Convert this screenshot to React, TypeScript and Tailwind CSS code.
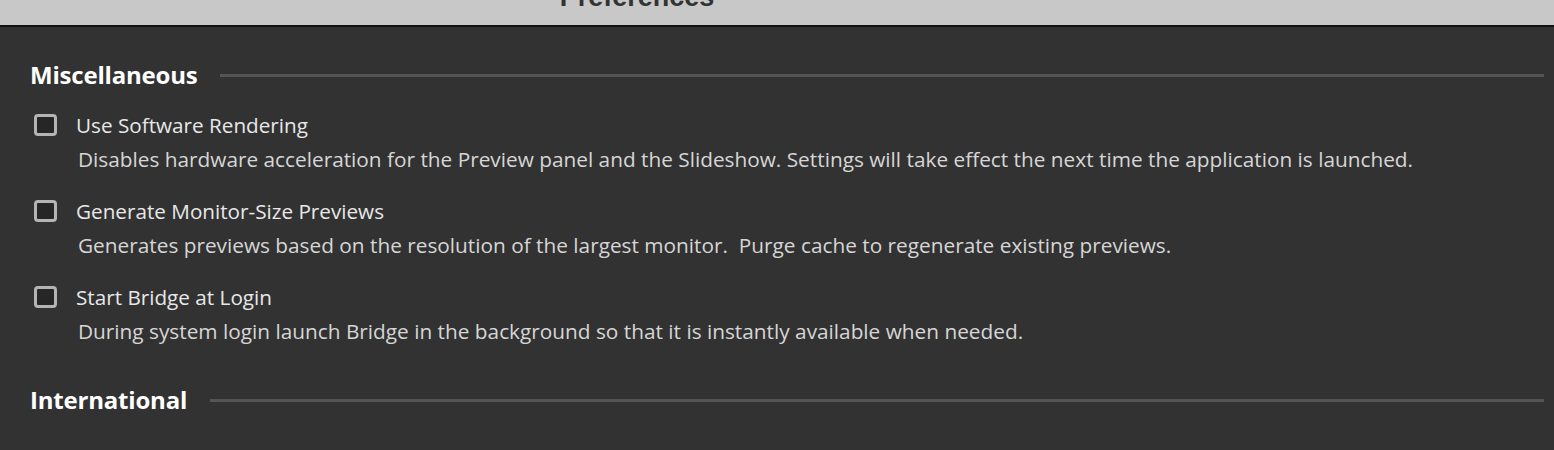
const sections = [
  {
    title: "Miscellaneous",
    items: [
      {
        label: "Use Software Rendering",
        description:
          "Disables hardware acceleration for the Preview panel and the Slideshow. Settings will take effect the next time the application is launched.",
      },
      {
        label: "Generate Monitor-Size Previews",
        description:
          "Generates previews based on the resolution of the largest monitor.\u00a0 Purge cache to regenerate existing previews.",
      },
      {
        label: "Start Bridge at Login",
        description:
          "During system login launch Bridge in the background so that it is instantly available when needed.",
      },
    ],
  },
  { title: "International", items: [] },
];

function SectionHeader({ title }: { title: string }) {
  return (
    <div className="flex items-center gap-[23px] pl-[30px] pr-[10px]">
      <h2 className="text-[24px] font-bold text-white leading-[24px] tracking-[-0.2px]">{title}</h2>
      <div className="flex-1 h-[3px] bg-[#555555]" />
    </div>
  );
}

function CheckRow({ label, description }: { label: string; description: string }) {
  return (
    <div className="pl-[34px]">
      <label className="flex items-center gap-[19px] h-[26px]">
        <span className="w-[23px] h-[22px] rounded-[4px] border-[3px] border-[#b4b4b4] bg-[#262626]" />
        <span className="text-[20.7px] text-[#e8e8e8] leading-none">{label}</span>
      </label>
      <p className="mt-[11px] pl-[44px] text-[20.8px] text-[#d6d6d6] leading-[21px]">{description}</p>
    </div>
  );
}

export default function App() {
  return (
    <div className="w-[1554px] h-[450px] overflow-hidden bg-[#323232]" style={{ fontFamily: '"Open Sans", "Noto Sans", sans-serif' }}>
      <div className="h-[27px] bg-[#c8c8c8] border-b-2 border-[#111] overflow-hidden flex justify-center">
        <span
          className="ml-[-280px] mt-[-16px] text-[27px] font-bold text-[#333] leading-none"
          style={{ fontFamily: '"Liberation Sans", Arial, sans-serif' }}
        >
          Preferences
        </span>
      </div>

      <div className="pt-[36px]">
        <SectionHeader title={sections[0].title} />
        <div className="mt-[25px] flex flex-col gap-[28px]">
          {sections[0].items.map((item) => (
            <CheckRow key={item.label} {...item} />
          ))}
        </div>
        <div className="mt-[46px]">
          <SectionHeader title={sections[1].title} />
        </div>
      </div>
    </div>
  );
}
